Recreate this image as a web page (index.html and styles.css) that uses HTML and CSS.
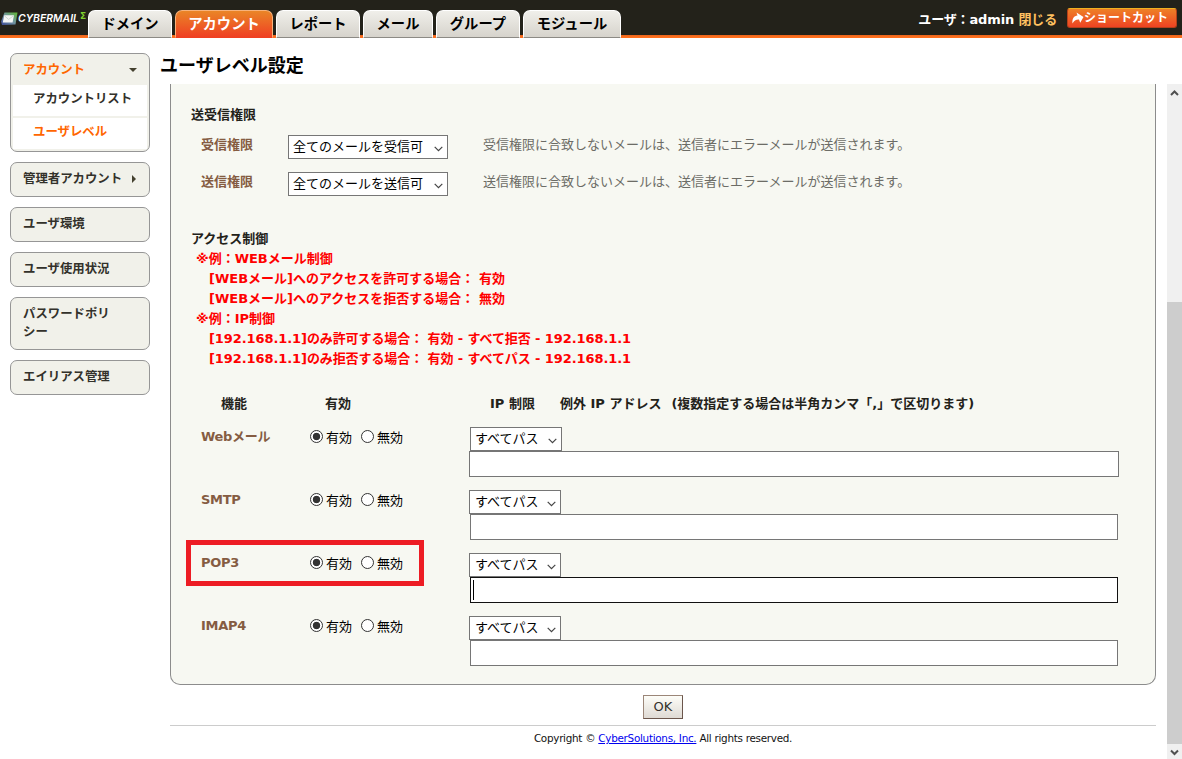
FILE: index.html
```html
<!DOCTYPE html>
<html lang="ja">
<head>
    <meta charset="UTF-8">
    <title>ユーザレベル設定</title>
    <link rel="stylesheet" href="styles.css">
</head>
<body>
    <!-- ヘッダー -->
    <header class="header">
        <div class="logo">
            <svg class="logo-mark" width="17" height="14" viewBox="0 0 17 14">
                <defs>
                    <linearGradient id="mark" x1="0" y1="1" x2="1" y2="0">
                        <stop offset="0" stop-color="#3c4a9a"/>
                        <stop offset="0.5" stop-color="#6f93a0"/>
                        <stop offset="1" stop-color="#5fb832"/>
                    </linearGradient>
                </defs>
                <path d="M3.5 0.5H16.5L14.5 12.5L1 13L0 9.5Z" fill="url(#mark)"/>
                <path d="M3.2 3.3H13L11.6 10.5H1.8Z" fill="#f4f6f4"/>
                <path d="M3.2 3.6L7.6 7.4L12.8 3.6" fill="none" stroke="#c3cecb" stroke-width="0.8"/>
            </svg>
            <span class="logo-text">CYBERMAIL</span><span class="logo-sigma">Σ</span>
        </div>
        <nav class="tabs">
            <a class="tab tab-4">ドメイン</a>
            <a class="tab tab-5 active">アカウント</a>
            <a class="tab tab-4">レポート</a>
            <a class="tab tab-3">メール</a>
            <a class="tab tab-4">グループ</a>
            <a class="tab tab-5">モジュール</a>
        </nav>
        <div class="user">
            <span class="user-name">ユーザ：admin <a class="close">閉じる</a></span>
            <a class="shortcut">
                <svg width="12" height="12" viewBox="0 0 12 12"><path d="M0.5 11.5C0 6.5 2 4 5.5 3.6L4.5 0.5L11.5 5L8.2 10.8L7 7.4C4 7.2 2 8.5 0.5 11.5Z" fill="#fff"/></svg>
                <span>ショートカット</span>
            </a>
        </div>
    </header>

    <div class="main">
        <!-- サイドメニュー -->
        <aside class="side">
            <div class="menu open">
                <div class="menu-head">アカウント<i class="arrow-down"></i></div>
                <a class="sub">アカウントリスト</a>
                <a class="sub current">ユーザレベル</a>
            </div>
            <div class="menu has-sub">管理者アカウント<i class="arrow-right"></i></div>
            <div class="menu">ユーザ環境</div>
            <div class="menu">ユーザ使用状況</div>
            <div class="menu">パスワードポリシー</div>
            <div class="menu">エイリアス管理</div>
        </aside>

        <div class="content">
            <h1 class="title">ユーザレベル設定</h1>
            <div class="scroller">
                <div class="pane">
                    <form class="panel">
                        <!-- 送受信権限 -->
                        <h2 class="section">送受信権限</h2>
                        <div class="perms">
                            <div class="perm">
                                <label class="name">受信権限</label>
                                <select class="select wide"><option>全てのメールを受信可</option></select>
                                <span class="note">受信権限に合致しないメールは、送信者にエラーメールが送信されます。</span>
                            </div>
                            <div class="perm">
                                <label class="name">送信権限</label>
                                <select class="select wide"><option>全てのメールを送信可</option></select>
                                <span class="note">送信権限に合致しないメールは、送信者にエラーメールが送信されます。</span>
                            </div>
                        </div>

                        <!-- アクセス制御 -->
                        <h2 class="section access">アクセス制御</h2>
                        <div class="hints">
                            <p>※例：WEBメール制御</p>
                            <p class="in">[WEBメール]へのアクセスを許可する場合： 有効</p>
                            <p class="in">[WEBメール]へのアクセスを拒否する場合： 無効</p>
                            <p>※例：IP制御</p>
                            <p class="in ip">[192.168.1.1]のみ許可する場合： 有効 - すべて拒否 - 192.168.1.1</p>
                            <p class="in ip">[192.168.1.1]のみ拒否する場合： 有効 - すべてパス - 192.168.1.1</p>
                        </div>

                        <div class="service-head">
                            <span>機能</span>
                            <span>有効</span>
                            <span>IP 制限</span>
                            <span>例外 IP アドレス<span class="remark">(複数指定する場合は半角カンマ「,」で区切ります)</span></span>
                        </div>
                        <div class="service first">
                            <label class="name">Webメール</label>
                            <div class="radios">
                                <input type="radio" name="web" class="radio" checked><span class="on">有効</span>
                                <input type="radio" name="web" class="radio"><span>無効</span>
                            </div>
                            <div class="limit">
                                <select class="select"><option>すべてパス</option></select>
                                <div class="field"><input type="text" class="text"></div>
                            </div>
                        </div>
                        <div class="service">
                            <label class="name">SMTP</label>
                            <div class="radios">
                                <input type="radio" name="smtp" class="radio" checked><span class="on">有効</span>
                                <input type="radio" name="smtp" class="radio"><span>無効</span>
                            </div>
                            <div class="limit">
                                <select class="select"><option>すべてパス</option></select>
                                <div class="field"><input type="text" class="text"></div>
                            </div>
                        </div>
                        <div class="service">
                            <label class="name">POP3</label>
                            <div class="radios">
                                <input type="radio" name="pop3" class="radio" checked><span class="on">有効</span>
                                <input type="radio" name="pop3" class="radio"><span>無効</span>
                            </div>
                            <div class="limit">
                                <select class="select"><option>すべてパス</option></select>
                                <div class="field"><input type="text" class="text focused"><i class="caret"></i></div>
                            </div>
                            <div class="highlight"></div>
                        </div>
                        <div class="service">
                            <label class="name">IMAP4</label>
                            <div class="radios">
                                <input type="radio" name="imap4" class="radio" checked><span class="on">有効</span>
                                <input type="radio" name="imap4" class="radio"><span>無効</span>
                            </div>
                            <div class="limit">
                                <select class="select"><option>すべてパス</option></select>
                                <div class="field"><input type="text" class="text"></div>
                            </div>
                        </div>
                    </form>
                    <div class="actions"><button type="button" class="ok">OK</button></div>
                    <footer class="footer">Copyright © <a href="#">CyberSolutions, Inc.</a> All rights reserved.</footer>
                </div>
                <div class="scrollbar">
                    <svg width="15" height="18" viewBox="0 0 15 18"><path d="M4 11L7.5 7.5L11 11" fill="none" stroke="#505050" stroke-width="2"/></svg>
                    <div class="thumb"></div>
                    <svg width="15" height="15" viewBox="0 0 15 15"><path d="M4 6.5L7.5 10L11 6.5" fill="none" stroke="#505050" stroke-width="2"/></svg>
                </div>
            </div>
        </div>
    </div>
</body>
</html>
```

FILE: styles.css
```css
* {
    box-sizing: border-box;
}
body {
    margin: 0;
    height: 759px;
    overflow: hidden;
    display: flex;
    flex-direction: column;
    background: #fff;
    color: #23221a;
    font-family: "DejaVu Sans", "Noto Sans CJK JP", sans-serif;
    font-size: 13px;
    line-height: 20px;
}

/* header */
.header {
    display: flex;
    flex: none;
    height: 38px;
    background: linear-gradient(#23221a 35px, #e9641c 35px, #ff701e 37px);
}
.logo {
    display: flex;
    width: 88px;
    padding: 12px 0 0 1px;
}
.logo-mark {
    flex: none;
}
.logo-text {
    width: 61px;
    font: italic 600 10.4px/14px Inter, sans-serif;
    color: #fff;
    white-space: nowrap;
}
.logo-sigma {
    margin-left: 1px;
    font: bold 9px/8px "DejaVu Sans", sans-serif;
    color: #7fd02c;
}
.tabs {
    display: flex;
    gap: 3px;
    padding-top: 10px;
}
.tab {
    height: 28px;
    border: 1px solid #fff;
    border-bottom: 1px solid #8c8a85;
    border-radius: 7px 7px 0 0;
    background: linear-gradient(#f0efea, #d6d3cc);
    color: #000;
    font-size: 14.3px;
    font-weight: bold;
    line-height: 26px;
    text-align: center;
    white-space: nowrap;
}
.tab-3 {
    width: 70px;
}
.tab-4 {
    width: 84px;
}
.tab-5 {
    width: 98px;
}
.tab.active {
    border-color: #f7b27c;
    border-bottom-color: #f04020;
    background: linear-gradient(#ea8527, #ef4023);
    color: #fff;
}
.user {
    display: flex;
    margin-left: auto;
    padding-right: 5px;
    color: #fff;
}
.user-name {
    padding-right: 10px;
    font-weight: bold;
    letter-spacing: -0.15px;
    line-height: 40px;
    white-space: nowrap;
}
.close {
    color: #ffc060;
}
.shortcut {
    display: flex;
    align-items: center;
    width: 110px;
    height: 20px;
    margin-top: 8px;
    padding-left: 4px;
    border: 1px solid #b5401a;
    border-top-color: #f0b020;
    border-radius: 3px;
    background: linear-gradient(#ee8026, #ee4323);
    font-size: 12px;
    font-weight: bold;
    white-space: nowrap;
}

/* side menu */
.main {
    display: flex;
    flex: 1;
    min-height: 0;
}
.side {
    display: flex;
    flex-direction: column;
    gap: 10px;
    width: 160px;
    padding: 15px 10px 0;
}
.menu {
    position: relative;
    border: 1px solid #969696;
    border-radius: 7px;
    padding: 7px 27px 8px 12px;
    background: #f1f1ea;
    color: #33312b;
    font-size: 12.4px;
    font-weight: bold;
    line-height: 18px;
}
.menu.has-sub {
    white-space: nowrap;
}
.menu.open {
    display: flex;
    flex-direction: column;
    gap: 2px;
    height: 99px;
    padding: 0 2px 2px;
}
.menu-head {
    height: 29px;
    padding-left: 10px;
    color: #ff6600;
    line-height: 32px;
}
.sub {
    height: 31px;
    padding-left: 20px;
    background: #fff;
    line-height: 28px;
    white-space: nowrap;
}
.sub.current {
    color: #ff6600;
}
.arrow-down {
    position: absolute;
    right: 12px;
    top: 14px;
    border: 4px solid transparent;
    border-top-color: #44412f;
    border-bottom: 0;
}
.arrow-right {
    position: absolute;
    right: 13px;
    top: 12px;
    border: 4px solid transparent;
    border-left-color: #44412f;
    border-right: 0;
}

/* content */
.content {
    display: flex;
    flex: 1;
    flex-direction: column;
}
.title {
    height: 46px;
    margin: 0;
    color: #000;
    font-size: 18px;
    line-height: 55px;
}
.scroller {
    display: flex;
    flex: 1;
}
.pane {
    flex: 1;
    padding: 0 11px 0 10px;
}
.panel {
    height: 601px;
    padding: 21px 20px 0;
    border: 1px solid #8c8c8c;
    border-top: 0;
    border-radius: 0 0 10px 10px;
    background: #f7f8f2;
}
.section {
    margin: 0;
    font-size: 13px;
}
.section.access {
    margin-top: 24px;
}
.perms {
    margin-top: 6px;
}
.perm {
    display: grid;
    grid-template-columns: 87px 195px 1fr;
    height: 37px;
    padding-left: 10px;
}
.name {
    color: #855c42;
    font-weight: bold;
    line-height: 28px;
}
.note {
    color: #6c6c66;
    line-height: 28px;
}
.select {
    appearance: none;
    display: block;
    width: 92px;
    height: 24px;
    padding: 0 0 1px 5px;
    border: 1px solid #767676;
    border-radius: 0;
    background: #fff url("data:image/svg+xml,%3Csvg xmlns='http://www.w3.org/2000/svg' width='9' height='6'%3E%3Cpath d='M0.7 0.8L4.5 4.6L8.3 0.8' fill='none' stroke='%23444' stroke-width='1.2'/%3E%3C/svg%3E") no-repeat right 4px top 10px;
    color: #000;
    font: inherit;
}
.select.wide {
    width: 160px;
    margin-top: 4px;
    padding-left: 4px;
}
.hints {
    padding-left: 5px;
    color: #ff0000;
    font-weight: bold;
}
.hints p {
    margin: 0;
}
.hints .in {
    padding-left: 13px;
}
.hints .ip {
    letter-spacing: -0.09px;
}

/* access control table */
.service-head {
    display: grid;
    grid-template-columns: 104px 165px 70px 1fr;
    margin: 25px 0 13px;
    padding-left: 30px;
    font-weight: bold;
    white-space: nowrap;
}
.remark {
    margin-left: 10px;
}
.service {
    position: relative;
    display: grid;
    grid-template-columns: 109px 159px 650px;
    height: 63px;
    padding-left: 10px;
}
.service .name {
    letter-spacing: -0.3px;
    line-height: 19px;
}
.radios {
    display: flex;
    height: 22px;
    color: #000;
    line-height: 22px;
}
.radio {
    appearance: none;
    width: 13px;
    height: 13px;
    margin: 3px 3px 0 0;
    border: 1px solid #333;
    border-radius: 50%;
    background: #fff;
}
.radio:checked {
    background: radial-gradient(circle, #333 3.4px, #fff 4.1px);
}
.radios .on {
    margin-right: 9px;
}
.field {
    position: relative;
    padding: 0 1px;
}
.text {
    display: block;
    width: 100%;
    height: 26px;
    border: 1px solid #767676;
    background: #fff;
}
.service.first .select {
    margin-left: 1px;
    padding-left: 4px;
}
.service.first .field {
    padding: 0;
}
.text.focused {
    border-color: #111;
}
.caret {
    position: absolute;
    left: 4px;
    top: 3px;
    width: 1px;
    height: 20px;
    background: #000;
}
.highlight {
    position: absolute;
    left: -5px;
    top: -13px;
    width: 238px;
    height: 46px;
    border: 5px solid #ed1c24;
}

/* bottom */
.actions {
    height: 41px;
    padding-top: 10px;
    border-bottom: 1px solid #ccc;
    text-align: center;
}
.ok {
    display: block;
    width: 40px;
    height: 24px;
    margin: 0 auto;
    padding: 0;
    border: 1px solid #9b8678;
    border-right-color: #6b564c;
    border-bottom-color: #6b564c;
    background: linear-gradient(#fdfdf8, #dfdad4);
    color: #33312b;
    font: inherit;
}
.footer {
    color: #111;
    font-size: 10.4px;
    letter-spacing: -0.28px;
    line-height: 25px;
    text-align: center;
}
.footer a {
    color: #0000ee;
}

.scrollbar {
    display: flex;
    flex-direction: column;
    width: 15px;
    background: #f0f0f0;
}
.thumb {
    height: 442px;
    margin-top: auto;
    background: #cdcdcd;
}
```
